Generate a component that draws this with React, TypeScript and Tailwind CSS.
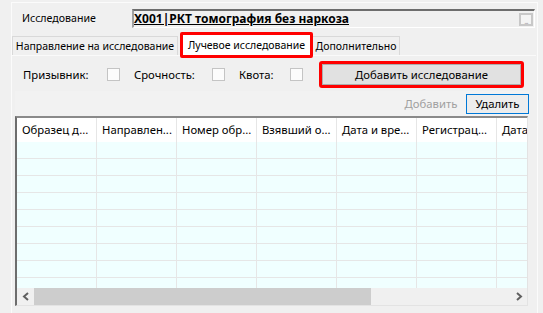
import React from 'react'

const columns = [
  'Образец д...',
  'Направлен...',
  'Номер обр...',
  'Взявший о...',
  'Дата и вре...',
  'Регистрац...',
  'Дата',
]

function CheckBox() {
  return <div className="w-[13px] h-[13px] border border-[#c4c4c4] bg-[#fcfcfc] shrink-0"></div>
}

function Chevron({ dir }: { dir: 'left' | 'right' }) {
  return (
    <svg width="8" height="9" viewBox="0 0 8 9">
      <path
        d={dir === 'left' ? 'M6 1L2 4.5L6 8' : 'M2 1L6 4.5L2 8'}
        fill="none"
        stroke="#606060"
        strokeWidth="2"
      />
    </svg>
  )
}

export default function App() {
  return (
    <div
      className="w-[543px] h-[313px] bg-[#f0f0f0] overflow-hidden text-[11.3px] text-black whitespace-nowrap"
      style={{ fontFamily: '"Noto Sans", "Open Sans", sans-serif' }}
    >
      <div className="ml-[11px] mt-[2px] w-[527px] h-[320px] border-l border-r border-t border-[#fbfbfb]">
        {/* Исследование */}
        <div className="flex items-center mt-[6px] h-[19px]">
          <div className="pl-[10px] w-[120px] leading-none text-[10.6px]">Исследование</div>
          <div className="flex items-center w-[403px] h-[19px] border-t-2 border-l-2 border-t-[#6d6d6d] border-l-[#a0a0a0] border-r border-b border-r-white border-b-white bg-[#f0f0f0]">
            <span className="text-[12px] font-bold underline leading-none">X001|РКТ томография без наркоза</span>
            <div className="ml-auto mr-[1px] w-[14px] h-[13px] border-2 border-[#c8c8c8] bg-[#f4f4f4] flex items-end justify-center">
              <span className="text-[8px] leading-[6px] text-[#a8a8a8] tracking-[-1px]">...</span>
            </div>
          </div>
        </div>

        {/* Tabs */}
        <div className="flex items-end h-[23px] mt-[4px] text-[10.5px]">
          <div className="w-[166px] h-[19px] border border-b-0 border-[#d9d9d9] bg-[#f0f0f0] flex items-center justify-center leading-none">
            Направление на исследование
          </div>
          <div className="relative z-10 ml-[2px] -mb-[3px] w-[133px] h-[26px] border-[3px] border-[#ff0000] rounded-[2px] bg-white flex items-center justify-center leading-none">
            Лучевое исследование
          </div>
          <div className="w-[87px] h-[19px] border border-b-0 border-l-0 border-[#d9d9d9] bg-[#f0f0f0] flex items-center justify-center leading-none">
            Дополнительно
          </div>
        </div>

        {/* Tab page */}
        <div className="w-[524px] border-t border-[#fafafa]">
          <div className="flex items-center mt-[5px] h-[27px] pl-[11px]">
            <span className="w-[84px] leading-none">Призывник:</span>
            <CheckBox />
            <span className="ml-[14px] w-[78px] leading-none">Срочность:</span>
            <CheckBox />
            <span className="ml-[14px] w-[51px] leading-none">Квота:</span>
            <CheckBox />
            <div className="ml-[16px] w-[205px] h-[27px] border-[3px] border-[#ff0000] rounded-[3px]">
              <div className="w-full h-full bg-[#e1e1e1] border border-[#adadad] flex items-center justify-center leading-none">
                Добавить исследование
              </div>
            </div>
          </div>

          {/* Toolbar */}
          <div className="ml-[3px] mt-[3px] w-[514px] h-[25px] bg-[#f2f2f2] flex items-center justify-end">
            <div className="w-[62px] h-[20px] flex items-center justify-center text-[#a0a0a0] leading-none">
              Добавить
            </div>
            <div className="ml-[4px] w-[63px] h-[20px] border border-[#0078d7] bg-[#ededed] flex items-center justify-center leading-none">
              Удалить
            </div>
          </div>

          {/* Grid */}
          <div className="ml-[3px] w-[513px] h-[190px] border-t-2 border-l-2 border-t-[#8a8a8a] border-l-[#6d6d6d] border-r border-b border-r-[#e3e3e3] border-b-[#e3e3e3] flex flex-col">
            <div className="flex h-[24px] bg-white shrink-0">
              {columns.map((c, i) => (
                <div
                  key={i}
                  className={`${i === 6 ? 'w-[30px]' : 'w-[80px] border-r border-[#e6e6e6]'} h-full flex items-center pl-[5px] overflow-hidden leading-none`}
                >
                  {c}
                </div>
              ))}
            </div>
            <div className="h-[146px] overflow-hidden bg-[#f0ffff] shrink-0">
              {Array.from({ length: 9 }).map((_, r) => (
                <div key={r} className="flex h-[17px] border-b border-[#e6e6e6]">
                  {columns.map((_, i) => (
                    <div
                      key={i}
                      className={`${i === 6 ? 'w-[30px]' : 'w-[80px] border-r border-[#e6e6e6]'} h-full`}
                    ></div>
                  ))}
                </div>
              ))}
            </div>
            <div className="flex h-[17px] bg-[#f0f0f0] shrink-0">
              <div className="w-[17px] h-full flex items-center justify-center">
                <Chevron dir="left" />
              </div>
              <div className="w-[337px] h-full bg-[#cdcdcd]"></div>
              <div className="flex-1"></div>
              <div className="w-[17px] h-full flex items-center justify-center">
                <Chevron dir="right" />
              </div>
            </div>
          </div>
        </div>
      </div>
    </div>
  )
}
